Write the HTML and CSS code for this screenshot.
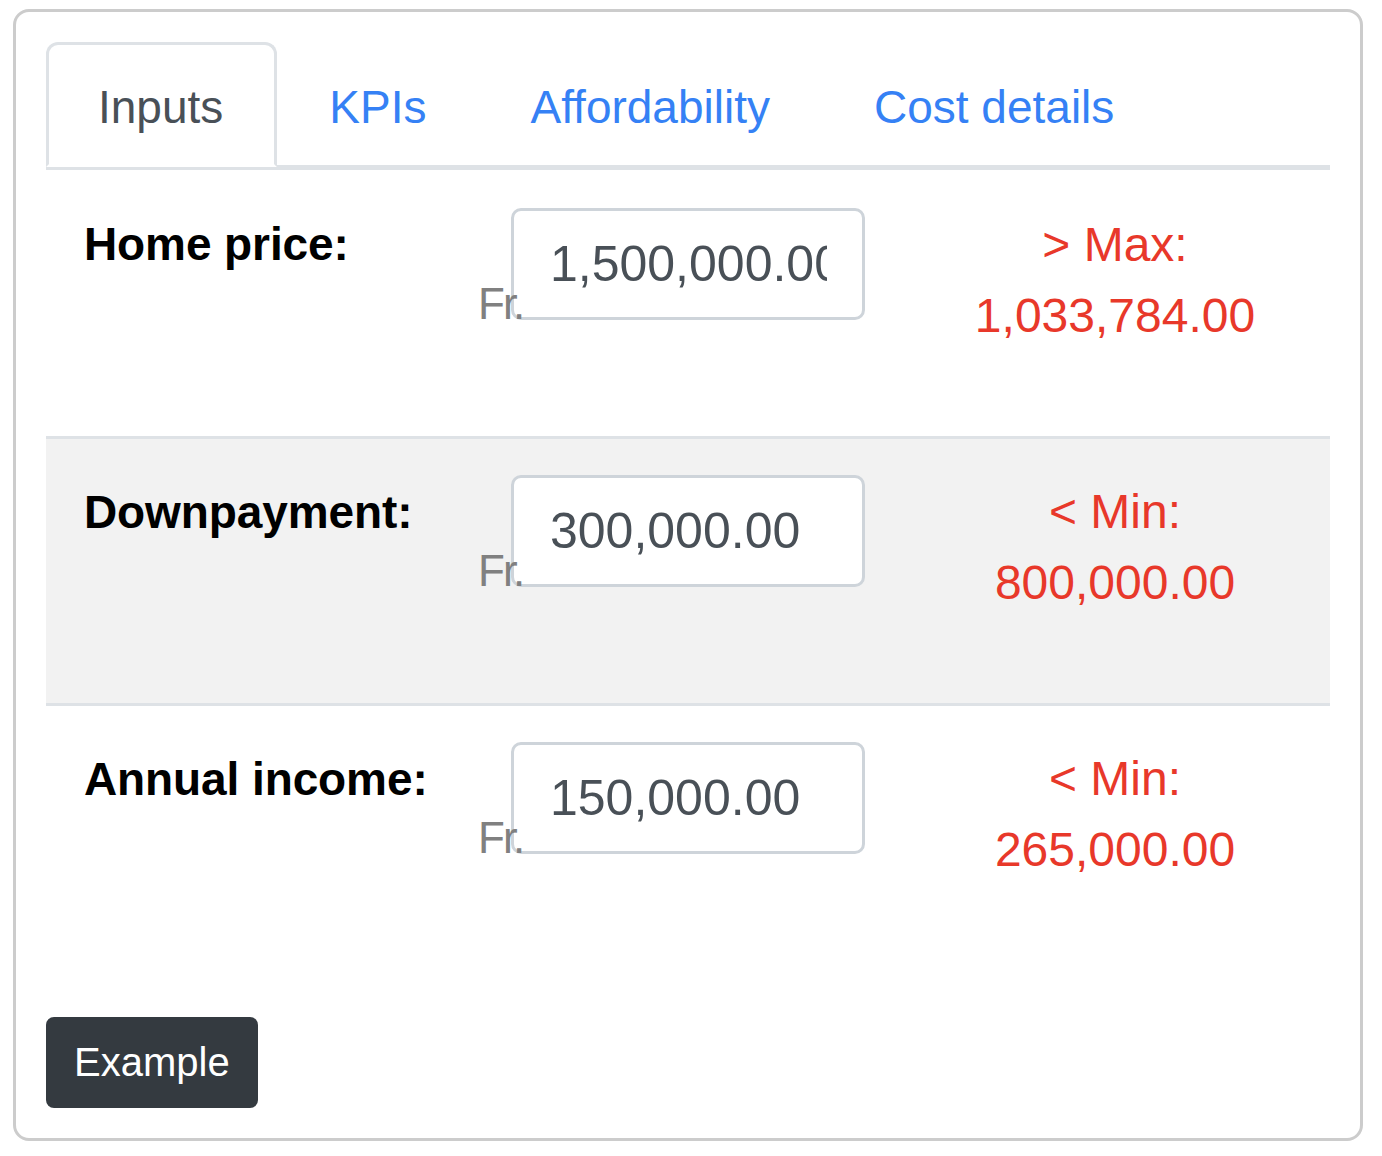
FILE: index.html
```html
<!DOCTYPE html>
<html lang="en">
<head>
<meta charset="utf-8">
<title>Mortgage calculator</title>
<link rel="stylesheet" href="styles.css">
</head>
<body>
<div class="card">
  <nav class="tabs">
    <a class="tab active">Inputs</a>
    <a class="tab">KPIs</a>
    <a class="tab">Affordability</a>
    <a class="tab">Cost details</a>
  </nav>
  <div class="rows">
    <div class="row first">
      <div class="label">Home price:</div>
      <div class="field">
        <span class="cur">Fr.</span>
        <input class="num" type="text" value="1,500,000.00">
      </div>
      <div class="limit">&gt; Max:<br>1,033,784.00</div>
    </div>
    <div class="row shaded">
      <div class="label">Downpayment:</div>
      <div class="field">
        <span class="cur">Fr.</span>
        <input class="num" type="text" value="300,000.00">
      </div>
      <div class="limit">&lt; Min:<br>800,000.00</div>
    </div>
    <div class="row">
      <div class="label">Annual income:</div>
      <div class="field">
        <span class="cur">Fr.</span>
        <input class="num" type="text" value="150,000.00">
      </div>
      <div class="limit">&lt; Min:<br>265,000.00</div>
    </div>
  </div>
  <button class="btn" type="button">Example</button>
</div>
</body>
</html>
```

FILE: styles.css
```css
* { box-sizing: border-box; }

html, body {
  margin: 0;
  background: #ffffff;
}

body {
  padding: 9px 19px 15px 13px;
  font-family: "Liberation Sans", Arial, Helvetica, sans-serif;
  color: #000;
}

.card {
  width: 1350px;
  border: 3px solid #cccccc;
  border-radius: 16px;
  padding: 30px 30px 30px 30px;
  background: #fff;
}

.tabs {
  display: flex;
  border-bottom: 2px solid #dee2e6;
  height: 125px;
}

.tab {
  display: block;
  height: 125px;
  margin-bottom: -2px;
  padding: 39px 49px 0 49px;
  border: 3px solid transparent;
  border-radius: 12px 12px 0 0;
  font-size: 46px;
  line-height: 46px;
  color: #3581f5;
  white-space: nowrap;
  cursor: pointer;
}

.tab.active {
  padding-right: 51px;
  color: #495057;
  border-color: #dee2e6 #dee2e6 #ffffff #dee2e6;
  background: #fff;
}

.row {
  display: grid;
  grid-template-columns: 424px 430px 430px;
  height: 267px;
  border-top: 3px solid #dee2e6;
}

.row.first { height: 269px; }

.row.shaded { background: #f2f2f2; }

.label {
  padding: 51px 0 0 38px;
  font-size: 46px;
  line-height: 46px;
  font-weight: bold;
  white-space: nowrap;
  letter-spacing: -0.1px;
}

.field {
  display: flex;
  align-items: flex-start;
  padding: 38px 0 0 8px;
}

.row:not(.first) .field { padding-top: 36px; }
.row:not(.first) .label { padding-top: 50px; }

.cur {
  position: relative;
  z-index: 1;
  flex-shrink: 0;
  width: 46px;
  margin-top: 74px;
  font-size: 44px;
  line-height: 44px;
  letter-spacing: -2px;
  color: #808080;
  white-space: nowrap;
}

.num {
  display: block;
  flex-shrink: 0;
  width: 354px;
  height: 112px;
  margin: 0 0 0 -13px;
  padding: 0 35px 0 36px;
  border: 3px solid #ced4da;
  border-radius: 10px;
  background: #fff;
  font-family: "Liberation Sans", Arial, Helvetica, sans-serif;
  font-size: 50px;
  color: #495057;
  outline: none;
}

.limit {
  padding-top: 39px;
  text-align: center;
  font-size: 48px;
  line-height: 71px;
  color: #e8382a;
}

.row:not(.first) .limit { padding-top: 37px; }

.btn {
  display: block;
  margin-top: 47px;
  height: 91px;
  padding: 0 28px;
  border: 0;
  border-radius: 8px;
  background: #343a40;
  color: #fff;
  font-family: "Liberation Sans", Arial, Helvetica, sans-serif;
  font-size: 40px;
  line-height: 91px;
}
```
